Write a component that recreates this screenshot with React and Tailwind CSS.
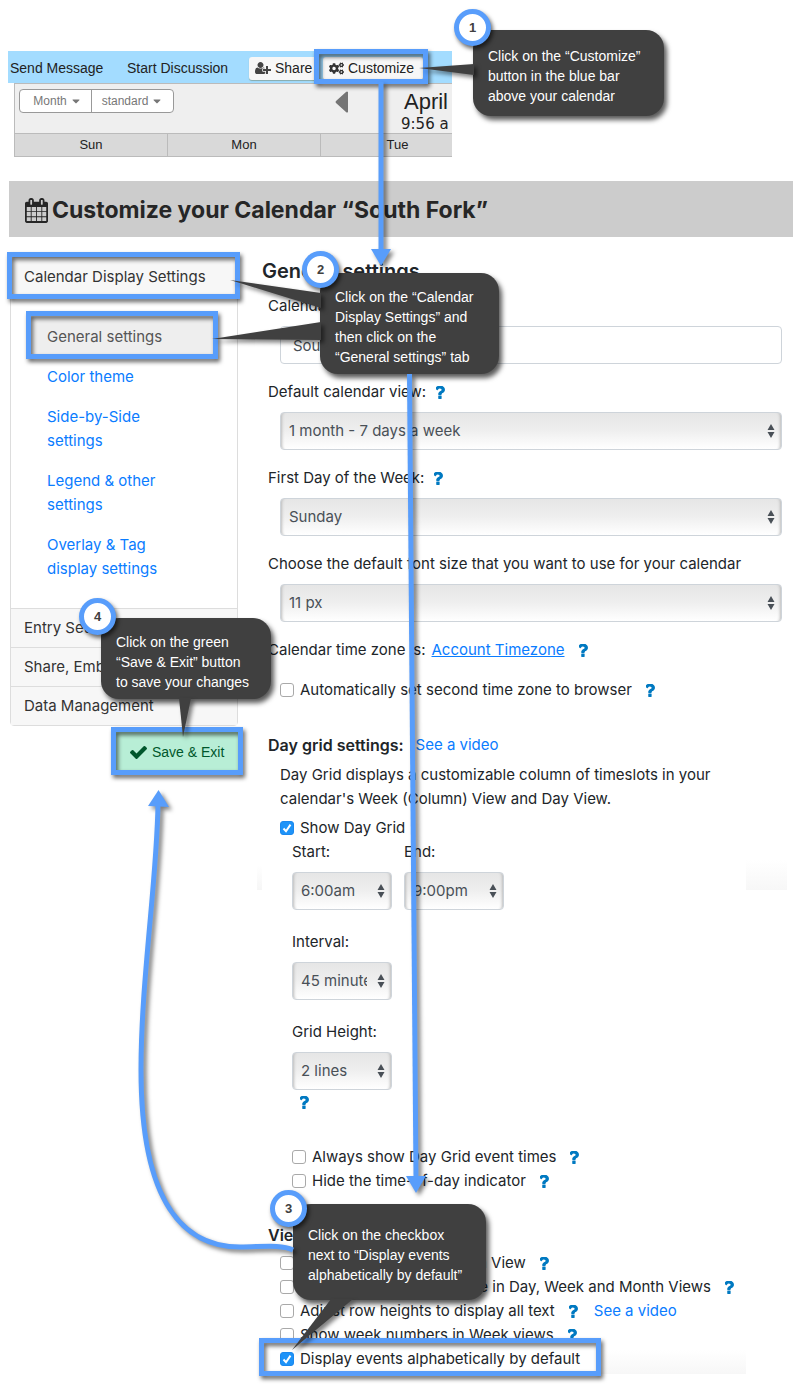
import React, { useId } from "react";
import { FaCogs, FaCaretDown } from "react-icons/fa";

function CalendarIcon() {
  return (
    <svg viewBox="0 0 1664 1792" className="h-[25px] w-[23px] shrink-0 fill-[#262626]" aria-hidden="true">
      <path d="M128 1664h288v-288h-288v288zm352 0h320v-288h-320v288zm-352-352h288v-320h-288v320zm352 0h320v-320h-320v320zm-352-384h288v-288h-288v288zm736 736h320v-288h-320v288zm-384-736h320v-288h-320v288zm768 736h288v-288h-288v288zm-384-352h320v-320h-320v320zm-352-864v-288q0-13-9.5-22.5t-22.5-9.5h-64q-13 0-22.5 9.5t-9.5 22.5v288q0 13 9.5 22.5t22.5 9.5h64q13 0 22.5-9.5t9.5-22.5zm736 864h288v-320h-288v320zm-384-384h320v-288h-320v288zm384 0h288v-288h-288v288zm32-480v-288q0-13-9.5-22.5t-22.5-9.5h-64q-13 0-22.5 9.5t-9.5 22.5v288q0 13 9.5 22.5t22.5 9.5h64q13 0 22.5-9.5t9.5-22.5zm384-64v1280q0 52-38 90t-90 38h-1408q-52 0-90-38t-38-90v-1280q0-52 38-90t90-38h128v-96q0-66 47-113t113-47h64q66 0 113 47t47 113v96h384v-96q0-66 47-113t113-47h64q66 0 113 47t47 113v96h128q52 0 90 38t38 90z" />
    </svg>
  );
}

function UserPlusIcon() {
  return (
    <svg viewBox="0 0 2048 1792" className="h-[14px] w-4 shrink-0 fill-[#444]" aria-hidden="true">
      <path d="M704 896q-159 0-271.5-112.5t-112.5-271.5 112.5-271.5 271.5-112.5 271.5 112.5 112.5 271.5-112.5 271.5-271.5 112.5zm960 128h352q13 0 22.5 9.5t9.5 22.5v192q0 13-9.5 22.5t-22.5 9.5h-352v352q0 13-9.5 22.5t-22.5 9.5h-192q-13 0-22.5-9.5t-9.5-22.5v-352h-352q-13 0-22.5-9.5t-9.5-22.5v-192q0-13 9.5-22.5t22.5-9.5h352v-352q0-13 9.5-22.5t22.5-9.5h192q13 0 22.5 9.5t9.5 22.5v352zm-736 224q0 52 38 90t90 38h256v238q-68 50-171 50h-874q-121 0-194-69t-73-190q0-53 3.5-103.5t14-109 26.5-108.5 43-97.5 62-81 85.5-53.5 111.5-20q19 0 39 17 79 61 154.5 91.5t164.5 30.5 164.5-30.5 154.5-91.5q20-17 39-17 132 0 217 96h-223q-52 0-90 38t-38 90v192z" />
    </svg>
  );
}

function CheckIcon() {
  return (
    <svg viewBox="121 334 1550 1188" className="h-[13px] w-[17px] shrink-0 fill-[#00572c]" aria-hidden="true">
      <path d="M1671 566q0 40-28 68l-724 724-136 136q-28 28-68 28t-68-28l-136-136-362-362q-28-28-28-68t28-68l136-136q28-28 68-28t68 28l294 295 656-657q28-28 68-28t68 28l136 136q28 28 28 68z" />
    </svg>
  );
}

function Help() {
  return (
    <button type="button" aria-label="Help" className="inline-flex shrink-0 items-center">
      <svg viewBox="170 256 855 1225" className="h-[13px] w-[9px] fill-[#0079c1]" aria-hidden="true">
        <path d="M704 1201v240q0 16-12 28t-28 12h-240q-16 0-28-12t-12-28v-240q0-16 12-28t28-12h240q16 0 28 12t12 28zm316-600q0 54-15.5 101t-35 76.5-55 59.5-57.5 43.5-61 35.5q-41 23-68.5 65t-27.5 67q0 17-12 32.5t-28 15.5h-240q-15 0-25.5-18.5t-10.5-37.5v-45q0-83 65-156.5t143-108.5q59-27 84-56t25-76q0-42-46.5-74t-107.5-32q-65 0-108 29-35 25-107 115-13 16-31 16-12 0-25-8l-164-125q-13-10-15.5-25t5.5-28q160-266 464-266 80 0 161 31t146 83 106 127.5 41 158.5z" />
      </svg>
    </button>
  );
}

function SelectBox({ id, value }) {
  return (
    <div className="relative">
      <select
        id={id}
        defaultValue={value}
        className="block h-[38px] w-full appearance-none rounded border border-[#ced4da] bg-linear-to-b from-[#e6e6e6] via-[#efefef] to-white pr-6 pl-2 text-[15px] text-[#495057] shadow-[inset_4px_0_3px_-3px_#bbb,inset_-4px_0_3px_-3px_#bbb]"
      >
        <option>{value}</option>
      </select>
      <svg viewBox="0 0 8 14" className="pointer-events-none absolute top-3 right-[7px] h-[14px] w-2 fill-[#495057]" aria-hidden="true">
        <path d="M0.5 6 4 0 7.5 6ZM0.5 8 7.5 8 4 14Z" />
      </svg>
    </div>
  );
}

function Field({ label, help, value }) {
  const id = useId();
  return (
    <div className="flex flex-col gap-2">
      <div className="flex h-6 items-center gap-[10px] whitespace-nowrap">
        <label htmlFor={id}>{label}</label>
        {help && <Help />}
      </div>
      <div className="pl-3">
        <SelectBox id={id} value={value} />
      </div>
    </div>
  );
}

function SmallField({ label, value }) {
  const id = useId();
  return (
    <div className="flex w-[100px] flex-col gap-2">
      <label htmlFor={id} className="h-6 leading-6 whitespace-nowrap">
        {label}
      </label>
      <SelectBox id={id} value={value} />
    </div>
  );
}

function Check({ label, checked, help, children }) {
  return (
    <div className="flex h-6 items-center gap-[14px] whitespace-nowrap">
      <label className="flex items-center gap-[6px]">
        <span className="grid size-[14px] place-items-center">
          <input
            type="checkbox"
            defaultChecked={checked}
            className="peer col-start-1 row-start-1 size-[14px] appearance-none rounded-[3px] border border-[#a9a9a9] bg-white checked:border-[#1b88ee] checked:bg-[#1e93f8]"
          />
          <svg viewBox="0 0 14 14" className="pointer-events-none col-start-1 row-start-1 hidden size-[14px] fill-none stroke-white stroke-2 peer-checked:block" aria-hidden="true">
            <path d="M3.5 7.5 6 10.2 10.5 3.6" />
          </svg>
        </span>
        {label}
      </label>
      {help && <Help />}
      {children}
    </div>
  );
}

function Highlight({ className }) {
  return <div className={`absolute border-[5px] border-[#589dfb] drop-shadow-[2px_3px_2px_rgba(0,0,0,0.6)] ${className}`} />;
}

function Callout({ lines, className }) {
  return (
    <div className={`absolute rounded-[18px] bg-[#404040] px-[15px] font-['Liberation_Sans',sans-serif] text-[14px] leading-5 whitespace-nowrap text-white shadow-[3px_4px_5px_rgba(0,0,0,0.65)] ${className}`}>
      {lines.map((line) => (
        <p key={line}>{line}</p>
      ))}
    </div>
  );
}

function Badge({ number, className }) {
  return (
    <span className={`absolute flex size-[37px] items-center justify-center rounded-full border-[5px] border-[#589dfb] bg-white font-['Liberation_Sans',sans-serif] text-[13px] font-bold text-[#404040] shadow-[2px_3px_4px_rgba(0,0,0,0.6)] ${className}`}>
      {number}
    </span>
  );
}

function CalendarPreview() {
  return (
    <section className="ml-2 w-[444px] max-w-full overflow-hidden pt-[51px] font-['Liberation_Sans',sans-serif] text-[#222]">
      <nav className="flex h-8 items-center bg-[#a3dcff] pt-[2px] pl-[2px] text-[14px] whitespace-nowrap">
        <a href="#message" className="w-[117px] shrink-0">Send Message</a>
        <a href="#discussion" className="w-[122px] shrink-0">Start Discussion</a>
        <button type="button" className="flex h-[23px] w-[70px] shrink-0 items-center gap-1 rounded-[3px] bg-[#f7f7f7] pl-[6px] shadow-[0_1px_1px_#8aa]">
          <UserPlusIcon />
          Share
        </button>
        <button type="button" className="ml-1 flex h-[23px] w-[100px] shrink-0 items-center gap-1 rounded-[3px] bg-[#f7f7f7] pl-[6px] shadow-[0_1px_1px_#8aa]">
          <FaCogs className="size-[15px] text-[#333]" />
          Customize
        </button>
      </nav>
      <div className="ml-[6px] border-t border-l border-[#bbb]">
        <div className="flex h-[49px] bg-[#efefef] whitespace-nowrap">
          <div className="mt-[5px] ml-1 flex h-6 w-[155px] shrink-0 divide-x divide-[#999] rounded border border-[#999] bg-white text-[12px] text-[#777]">
            <button type="button" className="flex w-[72px] items-center justify-center gap-[3px] pl-1">
              Month <FaCaretDown className="size-3" />
            </button>
            <button type="button" className="flex flex-1 items-center justify-center gap-[3px]">
              standard <FaCaretDown className="size-3" />
            </button>
          </div>
          <button type="button" aria-label="Previous month" className="mt-[7px] ml-[161px] h-[22px] w-[13px] shrink-0">
            <svg viewBox="0 0 13 22" className="h-[22px] w-[13px] fill-[#757575]">
              <path d="M13 1v20q-1 1-2 0L1 12q-1-1 0-2L11 1q1-1 2 0z" />
            </svg>
          </button>
          <div className="ml-[53px]">
            <p className="mt-[6px] pl-[3px] text-[22px] leading-6">April</p>
            <p className="font-['DejaVu_Sans',sans-serif] text-[15px] leading-5">9:56 a</p>
          </div>
        </div>
        <div className="grid w-[459px] grid-cols-3 divide-x divide-[#bbb] border-y border-[#bbb] bg-[#d9d9d9] text-center text-[13px] leading-[22px]">
          <span>Sun</span>
          <span>Mon</span>
          <span>Tue</span>
        </div>
      </div>
    </section>
  );
}

function Sidebar() {
  return (
    <aside className="ml-[10px] w-[228px] shrink-0 pt-5">
      <nav className="rounded border border-[#ddd] whitespace-nowrap text-[#333]">
        <a href="#display" className="block bg-[#f7f7f7] px-[13px] leading-[38px]">Calendar Display Settings</a>
        <ul className="border-t border-[#ddd] px-5 pt-5 pb-[19px] leading-6 text-[#0a7cff]">
          <li className="bg-[#eee] px-4 py-2 text-[#555]"><a href="#general">General settings</a></li>
          <li className="px-4 py-2"><a href="#color">Color theme</a></li>
          <li className="px-4 py-2"><a href="#side">Side-by-Side<br />settings</a></li>
          <li className="px-4 py-2"><a href="#legend">Legend &amp; other<br />settings</a></li>
          <li className="px-4 py-2"><a href="#overlay">Overlay &amp; Tag<br />display settings</a></li>
        </ul>
        <a href="#entry" className="block border-t border-[#ddd] bg-[#f7f7f7] px-[13px] leading-[38px]">Entry Settings</a>
        <a href="#share" className="block border-t border-[#ddd] bg-[#f7f7f7] px-[13px] leading-[38px]">Share, Embed</a>
        <a href="#data" className="block border-t border-[#ddd] bg-[#f7f7f7] px-[13px] leading-[38px]">Data Management</a>
      </nav>
      <button type="button" className="mt-[6px] ml-[106px] flex h-[38px] w-[122px] items-center gap-[5px] bg-[#b8eed6] pt-[3px] pl-[14px] font-['Liberation_Sans',sans-serif] text-[14px] whitespace-nowrap text-[#00572c]">
        <CheckIcon />
        Save &amp; Exit
      </button>
    </aside>
  );
}

function SettingsForm() {
  const nameId = useId();
  return (
    <main className="min-w-0 flex-1 pt-[22px] pr-[11px] pl-[30px]">
      <h2 className="-ml-[6px] text-[20px] leading-6 font-semibold">General settings</h2>
      <div className="mt-[11px] flex flex-col gap-4">
        <div className="flex flex-col gap-2">
          <label htmlFor={nameId} className="leading-6">Calendar name:</label>
          <div className="pl-3">
            <input id={nameId} defaultValue="South Fork" className="block h-[38px] w-full rounded border border-[#ced4da] bg-white px-3 text-[15px] text-[#495057]" />
          </div>
        </div>
        <Field label="Default calendar view:" help value="1 month - 7 days a week" />
        <Field label="First Day of the Week:" help value="Sunday" />
        <Field label="Choose the default font size that you want to use for your calendar" value="11 px" />
        <div className="flex h-6 items-center whitespace-nowrap">
          <span>Calendar time zone is:</span>
          <a href="#timezone" className="mr-[14px] ml-[6px] text-[#0a7cff] underline">Account Timezone</a>
          <Help />
        </div>
        <div className="pl-3">
          <Check label="Automatically set second time zone to browser" help />
        </div>
      </div>

      <div className="mt-[31px] flex h-6 items-center gap-3">
        <h3 className="text-[16px] font-semibold">Day grid settings:</h3>
        <a href="#grid-video" className="text-[#0a7cff]">See a video</a>
      </div>
      <div className="mt-[6px] pl-3">
        <p className="max-w-[450px] leading-6">
          Day Grid displays a customizable column of timeslots in your calendar's Week (Column) View and Day View.
        </p>
        <div className="mt-[5px]">
          <Check label="Show Day Grid" checked />
        </div>
        <div className="pl-3">
          <div className="flex flex-col gap-5">
            <div className="flex gap-3">
              <SmallField label="Start:" value="6:00am" />
              <SmallField label="End:" value="9:00pm" />
            </div>
            <SmallField label="Interval:" value="45 minutes" />
            <SmallField label="Grid Height:" value="2 lines" />
          </div>
          <div className="flex h-6 items-center pl-2">
            <Help />
          </div>
          <div className="mt-[31px]">
            <Check label="Always show Day Grid event times" help />
            <Check label="Hide the time-of-day indicator" help />
          </div>
        </div>
      </div>

      <h3 className="mt-[30px] text-[16px] leading-6 font-semibold">Views:</h3>
      <div className="mt-1 pl-3">
        <Check label="Show event titles in Month View" help />
        <Check label="Show the full calendar title in Day, Week and Month Views" help />
        <Check label="Adjust row heights to display all text" help>
          <a href="#rows-video" className="ml-[2px] text-[#0a7cff]">See a video</a>
        </Check>
        <Check label="Show week numbers in Week views" help />
        <Check label="Display events alphabetically by default" checked />
      </div>
    </main>
  );
}

function Annotations() {
  return (
    <div className="pointer-events-none absolute inset-0 overflow-hidden">
      <div className="absolute top-[865px] left-[257px] h-[25px] w-[5px] bg-linear-to-b from-white to-[#f6f6f6]" />
      <div className="absolute top-[860px] left-[746px] h-[30px] w-[41px] bg-linear-to-b from-white to-[#f7f7f7]" />
      <div className="absolute top-[1350px] left-[601px] h-6 w-[145px] bg-linear-to-b from-white to-[#f7f7f7]" />
      <Highlight className="top-[49px] left-[314px] h-[35px] w-[114px]" />
      <Highlight className="top-[252px] left-[7px] h-[47px] w-[233px]" />
      <Highlight className="top-[311px] left-[26px] h-12 w-48" />
      <Highlight className="top-[727px] left-[111px] h-12 w-[132px]" />
      <Highlight className="top-[1338px] left-[259px] h-[38px] w-[342px]" />
      <Callout lines={["Click on the “Customize”", "button in the blue bar", "above your calendar"]} className="top-[30px] left-[473px] h-[86px] w-[191px] pt-4" />
      <Callout lines={["Click on the “Calendar", "Display Settings” and", "then click on the", "“General settings” tab"]} className="top-[273px] left-[320px] h-[101px] w-[179px] pt-[14px]" />
      <Callout lines={["Click on the checkbox", "next to “Display events", "alphabetically by default”"]} className="top-[1204px] left-[293px] h-24 w-[193px] pt-[21px]" />
      <Callout lines={["Click on the green", "“Save & Exit” button", "to save your changes"]} className="top-[618px] left-[101px] h-[81px] w-[170px] pt-[14px]" />
      <Badge number="1" className="top-[9px] left-[454px]" />
      <Badge number="2" className="top-[251px] left-[302px]" />
      <Badge number="3" className="top-[1190px] left-[270px]" />
      <Badge number="4" className="top-[598px] left-[79px]" />
      <svg viewBox="0 0 793 1390" className="absolute top-0 left-0 h-[1390px] w-[793px] drop-shadow-[3px_3px_2px_rgba(0,0,0,0.5)]" aria-hidden="true">
        <g className="fill-[#404040]">
          <path d="M419 68 474 64V75Z" />
          <path d="M230 280 321 293V308Z" />
          <path d="M212 339 321 322V340Z" />
          <path d="M179 698H191L183 737Z" />
          <path d="M331 1299H353L292 1350Z" />
        </g>
        <g className="fill-none stroke-[#589dfb] stroke-[5]">
          <path d="M381 82V251" />
          <path d="M409.5 374 416 1178" />
          <path d="M293 1250C280 1244 262 1247 240 1247C185 1247 141 1205 141 1070C141 980 157 880 158 804" />
        </g>
        <g className="fill-[#589dfb]">
          <path d="M371 249H391L381 266Z" />
          <path d="M406 1176H426L416 1193Z" />
          <path d="M148 806 158.5 790 169 807Z" />
        </g>
      </svg>
    </div>
  );
}

export default function App() {
  return (
    <div className="relative min-h-screen overflow-hidden bg-white pb-[19px] font-['Inter',sans-serif] text-[15px] text-[#212529]">
      <CalendarPreview />
      <header className="mt-6 ml-[9px] flex h-14 items-center gap-1 bg-[#ccc] pt-[2px] pl-4 whitespace-nowrap text-[#262626]">
        <CalendarIcon />
        <h1 className="text-[23px] font-bold">Customize your Calendar “South Fork”</h1>
      </header>
      <div className="flex items-start">
        <Sidebar />
        <SettingsForm />
      </div>
      <Annotations />
    </div>
  );
}
